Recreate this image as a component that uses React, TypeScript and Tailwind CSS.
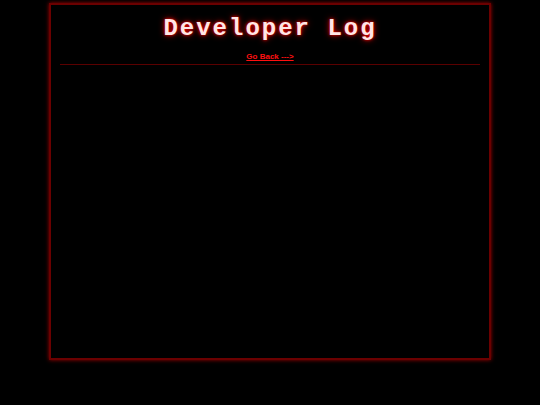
const App = () => {
  return (
    <div className="min-h-[405px] w-full bg-black pt-[3px]">
      <div className="mx-auto flex h-[357px] w-[442px] flex-col border-2 border-[#6b0000] px-[9px] shadow-[0_0_4px_#a00000]">
        <h1
          className="mt-[9px] text-center text-[24px] font-bold leading-[30px] tracking-[2px] text-[#ffe6e6] [text-shadow:0_0_3px_#ff0000,0_0_6px_#d00000]"
          style={{ fontFamily: '"Liberation Mono", "Courier New", monospace' }}
        >
          Developer Log
        </h1>
        <a
          href="#"
          className="mt-[8px] text-center text-[8px] font-bold leading-[10px] text-[#ff1010] underline"
          style={{ fontFamily: '"Liberation Sans", Arial, sans-serif', fontWeight: 700 }}
        >
          Go Back ---&gt;
        </a>
        <hr className="mt-[2px] border-t border-[#5a0000]" />
      </div>
    </div>
  );
};

export default App;
